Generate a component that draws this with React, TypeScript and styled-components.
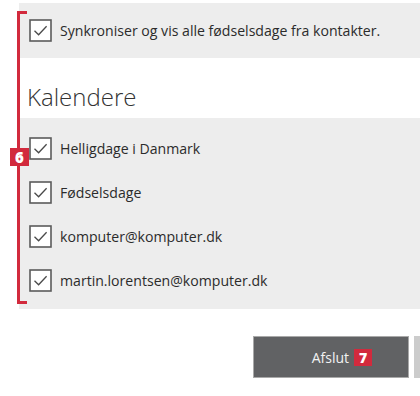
import React from "react";
import styled, { createGlobalStyle } from "styled-components";

const GlobalStyle = createGlobalStyle`
  html, body {
    margin: 0;
    padding: 0;
    background: #ffffff;
  }
  body {
    font-family: "Open Sans", "Noto Sans", sans-serif;
    color: #2b2b2b;
  }
`;

const calendars = [
  "Helligdage i Danmark",
  "Fødselsdage",
  "komputer@komputer.dk",
  "martin.lorentsen@komputer.dk",
];

function CheckIcon() {
  return (
    <svg width="23" height="23" viewBox="0 0 23 23">
      <rect x="1" y="1" width="21" height="21" fill="#fff" stroke="#5b5b5b" strokeWidth="1.6" />
      <path d="M5.5 11.8 L9.6 15.8 L17.6 7.2" fill="none" stroke="#4a4a4a" strokeWidth="1.3" />
    </svg>
  );
}

export default function App() {
  return (
    <>
      <GlobalStyle />
      <Page>
        <Bracket />
        <Badge top={148} left={10}>6</Badge>
        <Panel>
          <CheckRow>
            <CheckIcon />
            <Label>Synkroniser og vis alle fødselsdage fra kontakter.</Label>
          </CheckRow>
        </Panel>
        <Heading>Kalendere</Heading>
        <ListPanel>
          {calendars.map((name) => (
            <CheckRow key={name}>
              <CheckIcon />
              <Label>{name}</Label>
            </CheckRow>
          ))}
        </ListPanel>
        <ButtonRow>
          <PrimaryButton>
            Afslut
            <InlineBadge>7</InlineBadge>
          </PrimaryButton>
          <SecondaryButton />
        </ButtonRow>
      </Page>
    </>
  );
}

const Page = styled.div`
  position: relative;
  width: 420px;
  height: 396px;
  overflow: hidden;
  padding-top: 3px;
  box-sizing: border-box;
`;

const Bracket = styled.div`
  position: absolute;
  left: 17px;
  top: 11px;
  width: 7px;
  height: 287px;
  border: 3px solid #d22a3d;
  border-right: none;
`;

const Badge = styled.div<{ top: number; left: number }>`
  position: absolute;
  top: ${(p) => p.top}px;
  left: ${(p) => p.left}px;
  width: 19px;
  height: 18px;
  background: #d22a3d;
  color: #fff;
  font-family: "Open Sans", sans-serif;
  font-weight: 800;
  font-size: 15px;
  line-height: 18px;
  text-align: center;
`;

const Panel = styled.div`
  margin-left: 19px;
  height: 55px;
  background: #ededed;
  display: flex;
  align-items: center;
`;

const ListPanel = styled.div`
  margin-left: 19px;
  padding: 8px 0 7px;
  background: #ededed;
  display: flex;
  flex-direction: column;
`;

const CheckRow = styled.div`
  height: 44px;
  display: flex;
  align-items: center;
  gap: 8px;
  padding-left: 10px;
`;

const Label = styled.span`
  font-size: 14.1px;
  color: #2b2b2b;
  white-space: nowrap;
`;

const Heading = styled.h2`
  margin: 0;
  height: 60px;
  box-sizing: border-box;
  padding: 24px 0 0 27px;
  font-size: 24px;
  font-weight: 300;
  line-height: 30px;
  color: #333;
`;

const ButtonRow = styled.div`
  display: flex;
  gap: 5px;
  padding: 27px 0 0 253px;
`;

const PrimaryButton = styled.div`
  flex: none;
  width: 156px;
  height: 42px;
  box-sizing: border-box;
  background: #616264;
  border: 1px solid #a9a9a9;
  color: #f2f2f2;
  font-size: 14px;
  display: flex;
  align-items: center;
  justify-content: flex-end;
  padding-right: 36px;
  gap: 5px;
`;

const InlineBadge = styled.span`
  display: inline-block;
  width: 18px;
  height: 17px;
  background: #d22a3d;
  color: #fff;
  font-weight: 800;
  font-size: 14px;
  line-height: 17px;
  text-align: center;
`;

const SecondaryButton = styled.div`
  flex: none;
  width: 40px;
  height: 42px;
  background: #cccccc;
`;
